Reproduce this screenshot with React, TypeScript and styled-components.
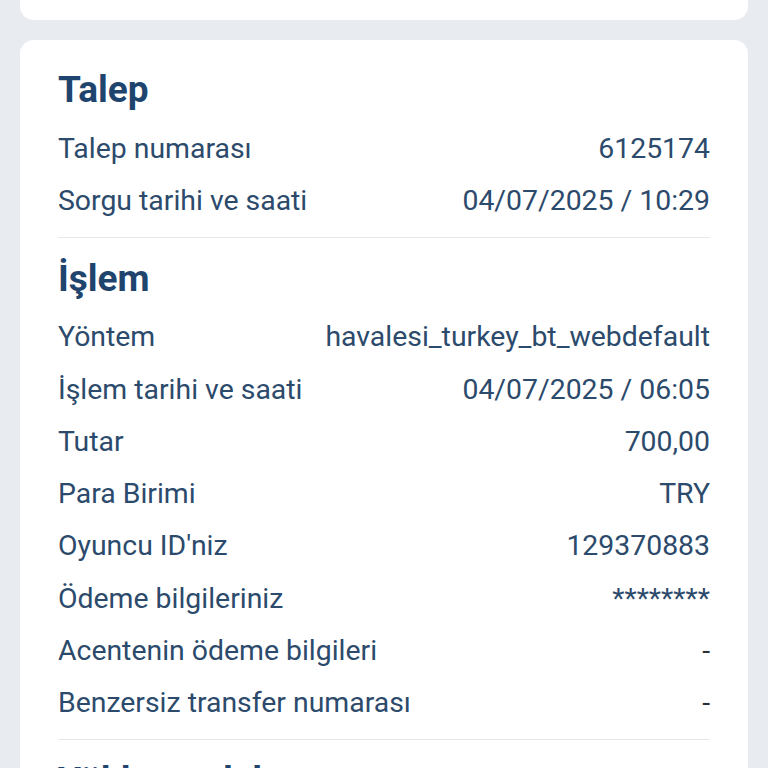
import styled, { createGlobalStyle } from 'styled-components'

const GlobalStyle = createGlobalStyle`
	html, body {
		margin: 0;
		padding: 0;
		background: #e8ecf0;
		font-family: Roboto, 'Noto Sans', Arial, sans-serif;
	}
`

const Page = styled.div`
	display: flex;
	flex-direction: column;
	gap: 20px;
	padding: 0 20px;
	height: 768px;
	overflow: hidden;
`
// bottom of the card above, scrolled off the screen
const CardTail = styled.div`
	height: 20px;
	background: #fff;
	border-radius: 0 0 14px 14px;
	flex-shrink: 0;
`
const Card = styled.div`
	background: #fff;
	border-radius: 14px;
	padding: 28px 38px;
	flex-shrink: 0;
`
const Section = styled.section`
	display: flex;
	flex-direction: column;
`
const Divider = styled.hr`
	border: none;
	border-top: 1px solid #e4e8ec;
	margin: 10px 0 19px;
`
const SectionTitle = styled.h2`
	margin: 0 0 10px;
	font-size: 37px;
	line-height: 44px;
	font-weight: 700;
	color: #1f456e;
`
const Row = styled.div`
	display: flex;
	justify-content: space-between;
	align-items: center;
	gap: 16px;
	height: 52.3px;
	font-size: 28.4px;
	color: #2c4a6b;
`
const Label = styled.span`
	white-space: nowrap;
`
const Value = styled.span<{ $dim?: boolean }>`
	white-space: nowrap;
	text-align: right;
	color: ${(p) => (p.$dim ? '#2a2f36' : '#2c4a6b')};
`

type Item = { label: string; value: string }

const sections: { title: string; items: Item[] }[] = [
	{
		title: 'Talep',
		items: [
			{ label: 'Talep numarası', value: '6125174' },
			{ label: 'Sorgu tarihi ve saati', value: '04/07/2025 / 10:29' },
		],
	},
	{
		title: 'İşlem',
		items: [
			{ label: 'Yöntem', value: 'havalesi_turkey_bt_webdefault' },
			{ label: 'İşlem tarihi ve saati', value: '04/07/2025 / 06:05' },
			{ label: 'Tutar', value: '700,00' },
			{ label: 'Para Birimi', value: 'TRY' },
			{ label: "Oyuncu ID'niz", value: '129370883' },
			{ label: 'Ödeme bilgileriniz', value: '********' },
			{ label: 'Acentenin ödeme bilgileri', value: '-' },
			{ label: 'Benzersiz transfer numarası', value: '-' },
		],
	},
	{
		title: 'Yükleme dekontu',
		items: [],
	},
]

const App = () => {
	return (
		<>
			<GlobalStyle />
			<Page>
				<CardTail />
				<Card>
					{sections.map((section, index) => (
						<Section key={section.title}>
							{index > 0 && <Divider />}
							<SectionTitle>{section.title}</SectionTitle>
							{section.items.map((item) => (
								<Row key={item.label}>
									<Label>{item.label}</Label>
									<Value $dim={item.value === '-'}>{item.value}</Value>
								</Row>
							))}
						</Section>
					))}
				</Card>
			</Page>
		</>
	)
}

export default App
